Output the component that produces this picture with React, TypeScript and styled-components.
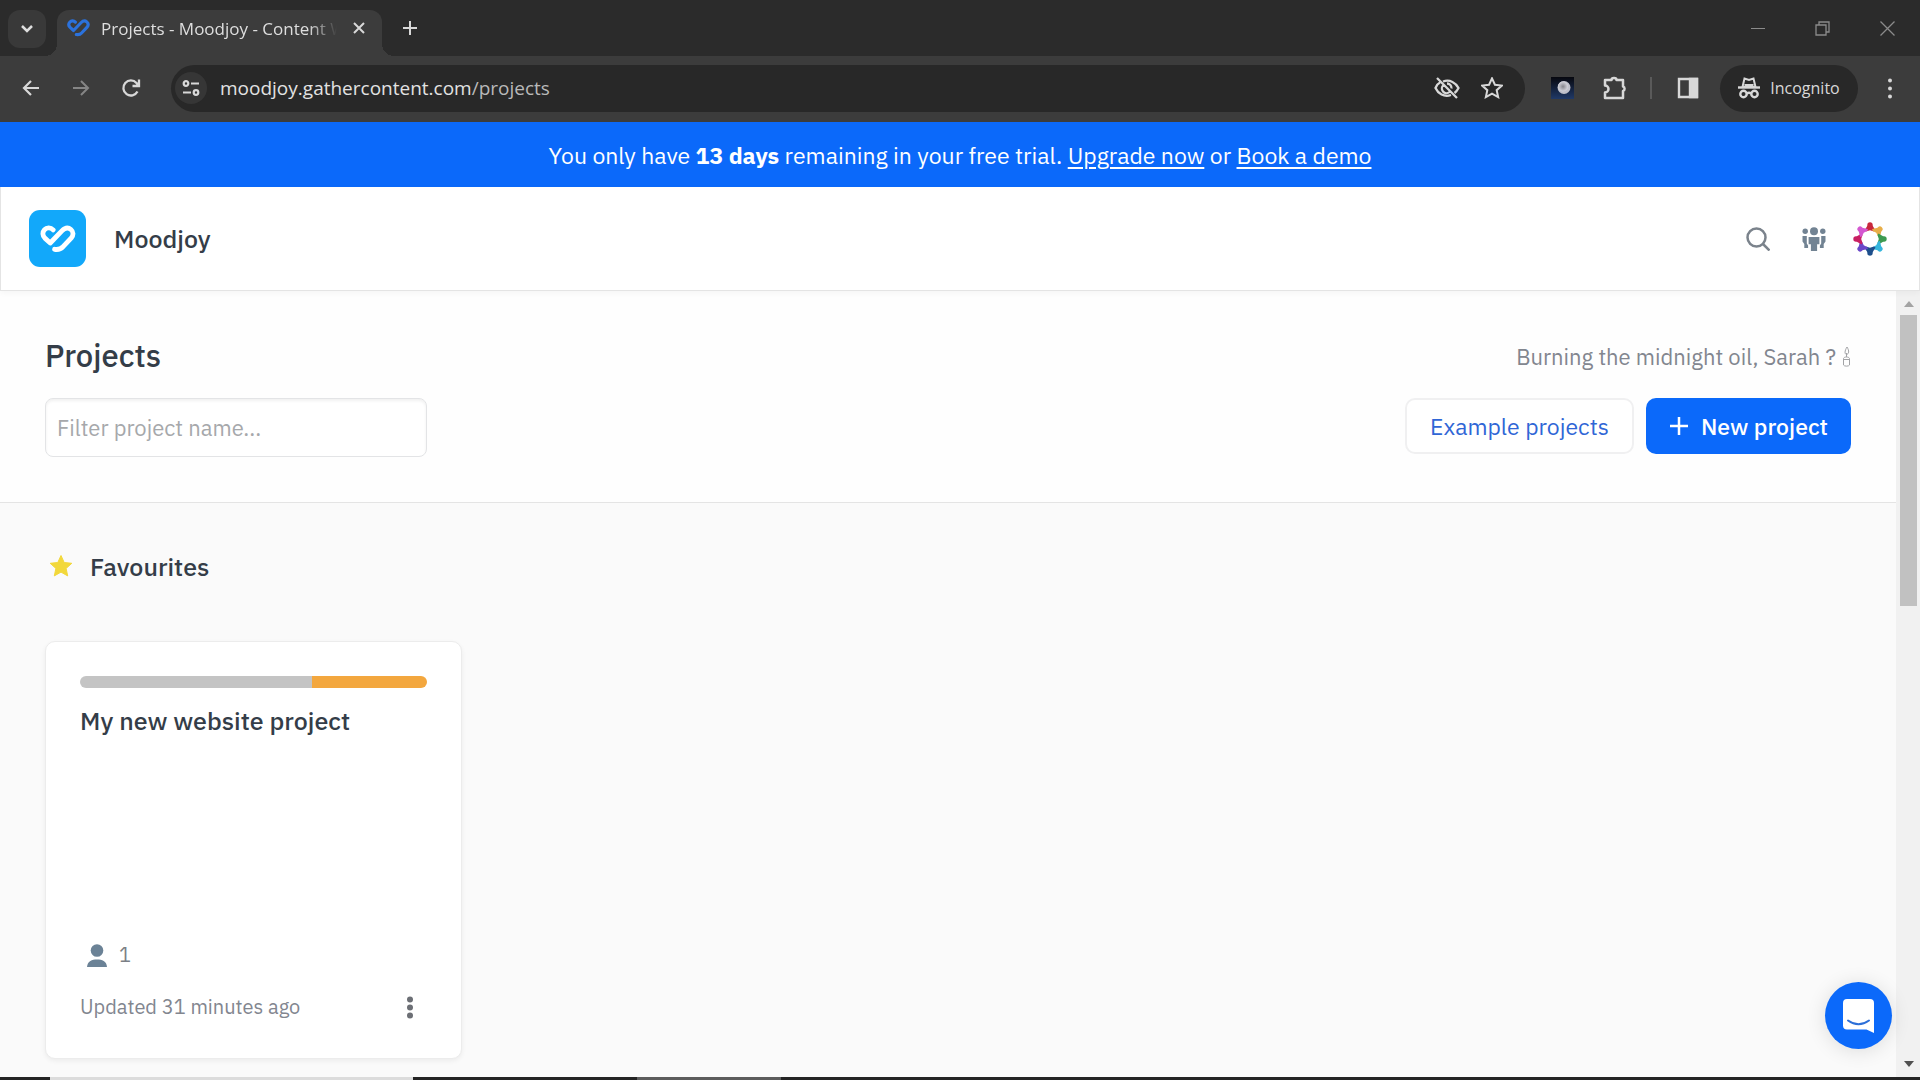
import React from "react";
import styled, { createGlobalStyle, css } from "styled-components";

const chromeFont = `"Open Sans", "Noto Sans", sans-serif`;
const pageFont = `"IBM Plex Sans", "Noto Sans", "Open Sans", sans-serif`;

const GlobalStyle = createGlobalStyle`
  * { box-sizing: border-box; }
  body { margin: 0; background: #fafafa; overflow: hidden; }
  h1, h2, h3, p { margin: 0; font-weight: 500; }
  button { font: inherit; color: inherit; background: none; border: 0; padding: 0; margin: 0; }
  svg { display: block; flex: none; }
`;

const Window = styled.div`
  height: 100vh;
  display: flex;
  flex-direction: column;
  font-family: ${pageFont};
  color: #343d48;
`;

/* ---------- browser chrome ---------- */

const TabStrip = styled.header`
  flex: none;
  height: 56px;
  display: flex;
  align-items: flex-end;
  background: #2b2b2b;
  color: #dedede;
  font-family: ${chromeFont};
`;

const TabSearch = styled.button`
  width: 38px;
  height: 38px;
  margin: 0 11px 8px 8px;
  border-radius: 12px;
  background: #393939;
  display: grid;
  place-items: center;
`;

const Tab = styled.div`
  position: relative;
  width: 325px;
  height: 46px;
  padding: 0 12px 10px 10px;
  display: flex;
  align-items: center;
  gap: 11px;
  background: #3c3c3c;
  border-radius: 12px 12px 0 0;
  font-size: 17px;

  &::before,
  &::after {
    content: "";
    position: absolute;
    bottom: 0;
    width: 12px;
    height: 12px;
  }
  &::before {
    left: -12px;
    background: radial-gradient(circle at 0 0, transparent 12px, #3c3c3c 12px);
  }
  &::after {
    right: -12px;
    background: radial-gradient(circle at 100% 0, transparent 12px, #3c3c3c 12px);
  }
`;

const TabTitle = styled.span`
  flex: 1;
  overflow: hidden;
  white-space: nowrap;
  mask-image: linear-gradient(to right, #000 88%, transparent);
`;

const ChromeButton = styled.button<{ $size?: number; $dim?: boolean }>`
  width: ${(p) => p.$size ?? 32}px;
  height: ${(p) => p.$size ?? 32}px;
  display: grid;
  place-items: center;
  color: ${(p) => (p.$dim ? "#858585" : "#d8d8d8")};
`;

const NewTab = styled(ChromeButton)`
  margin: 0 0 12px 12px;
`;

const WindowControls = styled.div`
  margin-left: auto;
  height: 56px;
  display: flex;
  align-items: center;
  color: #8b8b8b;
`;

const WindowButton = styled.button`
  width: 65px;
  height: 56px;
  display: grid;
  place-items: center;
`;

const Toolbar = styled.nav`
  flex: none;
  height: 66px;
  padding: 0 14px 2px 15px;
  display: flex;
  align-items: center;
  background: #3c3c3c;
  color: #d8d8d8;
  font-family: ${chromeFont};
`;

const NavButtons = styled.div`
  display: flex;
  gap: 18px;
  margin-right: 24px;
`;

const Omnibox = styled.div`
  flex: 1;
  height: 47px;
  padding: 0 17px 0 4px;
  display: flex;
  align-items: center;
  gap: 13px;
  border-radius: 24px;
  background: #282828;
`;

const SiteInfo = styled.button`
  width: 32px;
  height: 32px;
  border-radius: 16px;
  background: #363636;
  display: grid;
  place-items: center;
`;

const Address = styled.div`
  flex: 1;
  font-size: 19px;
  color: #e2e2e2;
  span { color: #b9b9b9; }
`;

const Extensions = styled.div`
  display: flex;
  align-items: center;
  margin-left: 21px;
  gap: 20px;
`;

const Divider = styled.span`
  width: 2px;
  height: 22px;
  background: #5a5a5a;
`;

const Incognito = styled.div`
  height: 47px;
  width: 138px;
  border-radius: 24px;
  background: #282828;
  display: flex;
  align-items: center;
  justify-content: center;
  gap: 10px;
  font-size: 16px;
  margin: 0 -4px;
`;

/* ---------- web page ---------- */

const Banner = styled.div`
  flex: none;
  height: 65px;
  display: flex;
  align-items: center;
  justify-content: center;
  background: #0b69fa;
  color: #fff;
  font-size: 23px;
  p { font-weight: 400; }
  a { color: inherit; text-underline-offset: 3px; }
`;

const Header = styled.header`
  flex: none;
  height: 104px;
  padding: 0 31px 0 28px;
  display: flex;
  align-items: center;
  gap: 28px;
  background: #fff;
  border: 1px solid #e4e4e4;
  border-top: 0;
  z-index: 1;
  box-shadow: 0 2px 6px rgba(0, 0, 0, 0.04);
`;

const Brand = styled.a`
  width: 57px;
  height: 57px;
  border-radius: 11px;
  background: #12a8fa;
  display: grid;
  place-items: center;
`;

const OrgName = styled.div`
  font-size: 25px;
  font-weight: 500;
`;

const HeaderActions = styled.div`
  margin-left: auto;
  display: flex;
  gap: 20px;
  color: #7b838c;
`;

const HeaderButton = styled.button`
  width: 36px;
  height: 36px;
  display: grid;
  place-items: center;
`;

const Viewport = styled.div`
  flex: 1;
  min-height: 0;
  display: flex;
`;

const Main = styled.main`
  flex: 1;
  min-width: 0;
  overflow: hidden;
  background: #fafafa;
`;

const ProjectsHead = styled.section`
  padding: 40px 45px 45px;
  background: #fefefe;
  border-bottom: 1px solid #e4e4e4;
`;

const HeadRow = styled.div`
  display: flex;
  align-items: center;
  justify-content: space-between;
  & + & { margin-top: 17px; }
`;

const PageTitle = styled.h1`
  font-size: 31px;
  line-height: 50px;
`;

const Greeting = styled.p`
  display: flex;
  align-items: center;
  gap: 6px;
  font-size: 22px;
  font-weight: 400;
  color: #82868f;
`;

const FilterInput = styled.input`
  width: 382px;
  height: 59px;
  padding: 0 11px;
  border: 1px solid #e3e4e6;
  border-radius: 8px;
  background: #fff;
  box-shadow: inset 0 2px 3px rgba(0, 0, 0, 0.06);
  font: 400 22px ${pageFont};
  color: #343d48;
  &::placeholder { color: #a6a8ab; opacity: 1; }
`;

const HeadButtons = styled.div`
  display: flex;
  gap: 12px;
  margin-bottom: 3px;
`;

const Button = styled.button<{ $primary?: boolean }>`
  height: 56px;
  padding: 0 23px;
  display: flex;
  align-items: center;
  gap: 12px;
  border-radius: 10px;
  font-size: 23px;
  ${(p) =>
    p.$primary
      ? css`background: #0b69fa; color: #fff; font-weight: 500;`
      : css`background: #fff; color: #2f66d6; border: 2px solid #f0f0f1;`}
`;

const Favourites = styled.section`
  padding: 43px 45px;
`;

const SectionTitle = styled.h2`
  display: flex;
  align-items: center;
  gap: 17px;
  padding-left: 4px;
  font-size: 25px;
  line-height: 42px;
  svg { margin-bottom: 3px; }
`;

const Card = styled.article`
  width: 417px;
  height: 418px;
  margin-top: 53px;
  padding: 34px;
  display: flex;
  flex-direction: column;
  border: 1px solid #ececec;
  border-radius: 10px;
  background: #fff;
  box-shadow: 0 2px 5px rgba(0, 0, 0, 0.06);
`;

const Progress = styled.div`
  flex: none;
  height: 12px;
  display: flex;
  overflow: hidden;
  border-radius: 6px;
`;

const Segment = styled.span<{ $share: number; $color: string }>`
  flex: ${(p) => p.$share};
  background: ${(p) => p.$color};
`;

const CardTitle = styled.h3`
  margin-top: 15px;
  font-size: 25px;
  line-height: 36px;
`;

const Members = styled.div`
  margin-top: auto;
  padding-left: 7px;
  display: flex;
  align-items: center;
  gap: 12px;
  font-size: 20px;
  line-height: 32px;
  color: #7b7f86;
`;

const CardFoot = styled.footer`
  margin-top: 19px;
  display: flex;
  align-items: center;
  justify-content: space-between;
  font-size: 20px;
  line-height: 34px;
  color: #82868f;
`;

const MoreButton = styled.button`
  width: 34px;
  height: 34px;
  display: grid;
  place-items: center;
  color: #6c6f75;
`;

const Scrollbar = styled.div`
  width: 24px;
  padding: 10px 3px 10px 4px;
  display: flex;
  flex-direction: column;
  align-items: center;
  background: #f1f1f1;
`;

const Thumb = styled.div`
  width: 17px;
  flex: 0 0 38%;
  margin-top: 8px;
  background: #c1c1c1;
`;

const Arrow = styled.span<{ $down?: boolean }>`
  border: 5px solid transparent;
  ${(p) =>
    p.$down
      ? css`margin-top: auto; border-top: 6px solid #505050; border-bottom: 0;`
      : css`border-bottom: 6px solid #a3a3a3; border-top: 0;`}
`;

const ChatLauncher = styled.button`
  position: fixed;
  right: 28px;
  bottom: 31px;
  width: 67px;
  height: 67px;
  border-radius: 50%;
  background: #0b69fa;
  display: grid;
  place-items: center;
  z-index: 2;
  box-shadow: 0 2px 20px rgba(0, 0, 0, 0.12);
`;

const Taskbar = styled.div`
  flex: none;
  height: 3px;
  display: flex;
  background: #242424;
`;

const TaskItem = styled.span<{ $width: number; $gap: number; $color: string }>`
  width: ${(p) => p.$width}px;
  margin-left: ${(p) => p.$gap}px;
  background: ${(p) => p.$color};
`;

/* ---------- icons ---------- */

const Stroke = ({ size = 24, width = 2, box = 24, children }: { size?: number; width?: number; box?: number; children: React.ReactNode }) => (
  <svg width={size} height={size} viewBox={`0 0 ${box} ${box}`} fill="none" stroke="currentColor" strokeWidth={width} aria-hidden="true">
    {children}
  </svg>
);

const Mark = ({ width, color }: { width: number; color: string }) => (
  <svg width={width} height={(width * 28) / 37} viewBox="0 0 37 28" fill="none" stroke={color} strokeWidth="5" strokeLinecap="round" strokeLinejoin="round" aria-hidden="true">
    <path d="M13.500 5C11 2.500 7 2.200 4.700 4.800C2.300 7.500 2.500 11 5 13.500L10.500 18.500L22.500 6C25.500 3 29 2.200 31.800 4.600C34.600 7 34.500 10.500 32 13.500L23.500 22.500C21.500 24.800 18.500 25.500 15 25" />
  </svg>
);

const Dots = ({ r = 2, height = 24 }: { r?: number; height?: number }) => (
  <svg width="8" height={height} viewBox={`0 0 8 ${height}`} fill="currentColor" aria-hidden="true">
    <circle cx="4" cy={r + 0.5} r={r} />
    <circle cx="4" cy={height / 2} r={r} />
    <circle cx="4" cy={height - r - 0.5} r={r} />
  </svg>
);

const starPath = "M12 1.500L15.200 8.500L22.800 9.300L17.100 14.400L18.700 21.900L12 18.100L5.300 21.900L6.900 14.400L1.200 9.300L8.800 8.500Z";

const TeamIcon = () => (
  <svg width="24" height="24" viewBox="0 0 24 24" fill="#728393" aria-hidden="true">
    <circle cx="12" cy="4.300" r="4" />
    <circle cx="3.200" cy="4.300" r="2.700" />
    <circle cx="20.800" cy="4.300" r="2.700" />
    <path d="M6.600 10h10.800v7.200h-2.300V24H8.900v-6.800H6.600z" />
    <path d="M0.500 9h4.300v7.500l1.300 2V21H2.300v-4L0.500 14.500z" />
    <path d="M23.500 9h-4.300v7.500l-1.300 2V21h3.800v-4l1.800-2.500z" />
  </svg>
);

const avatarColors = ["#c8283c", "#e8ae48", "#3d9a50", "#35b5dc", "#1d4f8c", "#6a48c8", "#c81f62", "#d457cf"];

const Avatar = () => (
  <svg width="34" height="34" viewBox="-17 -17 34 34" aria-hidden="true">
    {avatarColors.map((color, i) => (
      <g key={color} transform={`rotate(${i * 45})`} fill={color}>
        <circle cx="0" cy="-14" r="2.700" />
        <path d="M-5.500 -8.500L-2.500 -13.500H2.500L5.500 -8.500L4 -7.500L0 -8.800L-4 -7.500Z" />
      </g>
    ))}
  </svg>
);

const Candle = () => (
  <svg width="9" height="21" viewBox="0 0 9 21" fill="none" stroke="#a2a3a6" strokeWidth="1" aria-hidden="true">
    <path d="M5 1C7.500 5 7 8 4.500 8.500C2.500 8 2.500 5 5 1ZM4.500 7v4M1.500 12.500C2 10.500 7 10.500 7.500 12.500V19C7 20.500 2 20.500 1.500 19ZM2 13.500h5" />
  </svg>
);

export default function App() {
  return (
    <Window>
      <GlobalStyle />
      <TabStrip>
        <TabSearch aria-label="Search tabs">
          <Stroke size={14} width={2.5} box={14}><path d="M2 4l5 5l5-5" /></Stroke>
        </TabSearch>
        <Tab>
          <Mark width={23} color="#2b72dd" />
          <TabTitle>Projects - Moodjoy - Content Workflow</TabTitle>
          <ChromeButton $size={22} aria-label="Close tab">
            <Stroke size={12} width={2} box={12}><path d="M1 1l10 10M11 1l-10 10" /></Stroke>
          </ChromeButton>
        </Tab>
        <NewTab aria-label="New tab">
          <Stroke size={16} width={2} box={16}><path d="M8 1v14M1 8h14" /></Stroke>
        </NewTab>
        <WindowControls>
          <WindowButton aria-label="Minimize">
            <Stroke size={14} width={1} box={14}><path d="M0 7.500h14" /></Stroke>
          </WindowButton>
          <WindowButton aria-label="Restore">
            <Stroke size={15} width={1.3} box={15}><path d="M1 4h10v10H1zM4 4V1h10v10h-3" /></Stroke>
          </WindowButton>
          <WindowButton aria-label="Close">
            <Stroke size={15} width={1.3} box={15}><path d="M0.500 0.500l14 14M14.500 0.500l-14 14" /></Stroke>
          </WindowButton>
        </WindowControls>
      </TabStrip>

      <Toolbar aria-label="Browser toolbar">
        <NavButtons>
          <ChromeButton aria-label="Back">
            <Stroke size={18} width={2.2} box={18}><path d="M17 9H2M9 2L2 9l7 7" /></Stroke>
          </ChromeButton>
          <ChromeButton $dim aria-label="Forward">
            <Stroke size={18} width={2} box={18}><path d="M1 9h15M9 2l7 7l-7 7" /></Stroke>
          </ChromeButton>
          <ChromeButton aria-label="Reload">
            <Stroke size={20} width={2.300} box={20}><path d="M16.500 13.500A7.500 7.500 0 1 1 15.500 5L17 7M18 1.500V8h-6.500" /></Stroke>
          </ChromeButton>
        </NavButtons>
        <Omnibox>
          <SiteInfo aria-label="Site information">
            <Stroke size={18} width={2.200} box={18}>
              <circle cx="4" cy="4.500" r="2.300" /><path d="M9 4.500h8M1 13.500h8" /><circle cx="14" cy="13.500" r="2.300" />
            </Stroke>
          </SiteInfo>
          <Address>moodjoy.gathercontent.com<span>/projects</span></Address>
          <ChromeButton aria-label="Third-party cookies blocked">
            <Stroke size={26} width={2.300} box={26}>
              <path d="M3 3l20 20M9 6.500C16 4 22 8 24.500 13C23.500 15 22.500 16.500 20.500 18M17 20C10 22.500 4 18.500 1.500 13C2.500 10.500 4 8.500 6 7.500M9.500 10A4.500 4.500 0 0 0 15.500 17M13 8.500A4.500 4.500 0 0 1 17.500 13.500" />
            </Stroke>
          </ChromeButton>
          <ChromeButton aria-label="Bookmark this page">
            <Stroke size={22} width={2.200}><path d={starPath} /></Stroke>
          </ChromeButton>
        </Omnibox>
        <Extensions>
          <ChromeButton aria-label="Extension">
            <svg width="23" height="22" viewBox="0 0 23 22" aria-hidden="true">
              <defs>
                <linearGradient id="sky" x1="0" y1="0" x2="0" y2="1"><stop offset="0" stopColor="#07080f" /><stop offset="1" stopColor="#203967" /></linearGradient>
                <radialGradient id="moon"><stop offset="0" stopColor="#85858c" /><stop offset="1" stopColor="#d4d4dc" /></radialGradient>
              </defs>
              <rect width="23" height="22" fill="url(#sky)" />
              <circle cx="13" cy="10.500" r="6.500" fill="#bfc0ca" />
              <circle cx="12" cy="9.500" r="5" fill="url(#moon)" />
            </svg>
          </ChromeButton>
          <ChromeButton aria-label="Extensions">
            <Stroke size={25} width={2.500} box={25}>
              <path strokeLinejoin="round" d="M3 4h6.500a2.500 2 0 0 1 5 0H21v6.500a2 2.300 0 0 1 0 4.500v7H3v-5.500a3.500 3.500 0 0 0 0-7z" />
            </Stroke>
          </ChromeButton>
          <Divider />
          <ChromeButton aria-label="Side panel">
            <Stroke size={22} width={2.400} box={22}><path d="M2 2h18v18H2z" /><path d="M13 2h7v18h-7z" fill="currentColor" /></Stroke>
          </ChromeButton>
          <Incognito>
            <svg width="22" height="22" viewBox="0 0 22 22" fill="none" stroke="currentColor" strokeWidth="2.400" aria-hidden="true">
              <path d="M0 10.500h22" />
              <path d="M4.500 10L6.500 1.500l4.500 1.500l4.500-1.500l2 8.500zM6.500 8h9" strokeWidth="2" />
              <circle cx="5.500" cy="17" r="3.200" /><circle cx="16.500" cy="17" r="3.200" /><path d="M8.500 16.500Q11 15 13.500 16.500" />
            </svg>
            Incognito
          </Incognito>
          <ChromeButton $size={32} aria-label="Menu"><Dots r={2} height={21} /></ChromeButton>
        </Extensions>
      </Toolbar>

      <Banner>
        <p>
          You only have <strong>13 days</strong> remaining in your free trial. <a href="#upgrade">Upgrade now</a> or <a href="#demo">Book a demo</a>
        </p>
      </Banner>

      <Header>
        <Brand href="#home" aria-label="Home"><Mark width={36} color="#fff" /></Brand>
        <OrgName>Moodjoy</OrgName>
        <HeaderActions>
          <HeaderButton aria-label="Search">
            <Stroke size={24} width={2.500}><circle cx="10.500" cy="10.500" r="9" /><path d="M17 17l6.500 6.500" /></Stroke>
          </HeaderButton>
          <HeaderButton aria-label="People"><TeamIcon /></HeaderButton>
          <HeaderButton aria-label="Account"><Avatar /></HeaderButton>
        </HeaderActions>
      </Header>

      <Viewport>
        <Main>
          <ProjectsHead>
            <HeadRow>
              <PageTitle>Projects</PageTitle>
              <Greeting>Burning the midnight oil, Sarah ?<Candle /></Greeting>
            </HeadRow>
            <HeadRow>
              <FilterInput type="text" aria-label="Filter project name" placeholder="Filter project name..." />
              <HeadButtons>
                <Button>Example projects</Button>
                <Button $primary>
                  <Stroke size={20} width={2.500} box={20}><path d="M10 1v18M1 10h18" /></Stroke>
                  New project
                </Button>
              </HeadButtons>
            </HeadRow>
          </ProjectsHead>
          <Favourites>
            <SectionTitle>
              <svg width="24" height="24" viewBox="0 0 24 24" fill="#f2d83b" stroke="#f2d83b" strokeWidth="1" strokeLinejoin="round" aria-hidden="true"><path d={starPath} /></svg>
              Favourites
            </SectionTitle>
            <Card>
              <Progress>
                <Segment $share={67} $color="#c4c4c4" />
                <Segment $share={33} $color="#f3a73e" />
              </Progress>
              <CardTitle>My new website project</CardTitle>
              <Members>
                <svg width="20" height="23" viewBox="0 0 20 23" fill="#6b8296" aria-hidden="true">
                  <circle cx="10" cy="6.500" r="6.300" /><path d="M0 23C0.500 17 5 15.500 10 15.500S19.500 17 20 23Z" />
                </svg>
                1
              </Members>
              <CardFoot>
                Updated 31 minutes ago
                <MoreButton aria-label="Project options"><Dots r={3} height={23} /></MoreButton>
              </CardFoot>
            </Card>
          </Favourites>
        </Main>
        <Scrollbar>
          <Arrow />
          <Thumb />
          <Arrow $down />
        </Scrollbar>
      </Viewport>

      <ChatLauncher aria-label="Open chat">
        <svg width="31" height="34" viewBox="0 0 31 34" aria-hidden="true">
          <path d="M4 0H27a4 4 0 0 1 4 4V34L23.500 30.500H4a4 4 0 0 1-4-4V4a4 4 0 0 1 4-4Z" fill="#fff" />
          <path d="M5 21.500Q15.500 29 26 21.500" fill="none" stroke="#2d6fd8" strokeWidth="2" strokeLinecap="round" />
        </svg>
      </ChatLauncher>

      <Taskbar>
        <TaskItem $width={363} $gap={50} $color="#dcdcdc" />
        <TaskItem $width={144} $gap={224} $color="#5c5c5c" />
      </Taskbar>
    </Window>
  );
}
